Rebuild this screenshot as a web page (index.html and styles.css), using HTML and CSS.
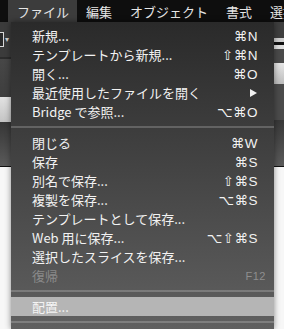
FILE: index.html
```html
<!DOCTYPE html>
<html lang="ja">
<head>
    <meta charset="UTF-8">
    <title>ファイル メニュー</title>
    <link rel="stylesheet" href="styles.css">
</head>
<body>
<div class="screen">
    <div class="menubar">
        <div class="bar-stub"><span>ト</span></div>
        <div class="bar-item active">ファイル</div>
        <div class="bar-item">編集</div>
        <div class="bar-item">オブジェクト</div>
        <div class="bar-item">書式</div>
        <div class="bar-item">選択</div>
    </div>

    <div class="workspace">
        <!-- app window behind the menu, left strip -->
        <div class="side side-left">
            <div class="bg-dark">
                <div class="dropdown"><span class="dd-box"></span><span class="dd-arrow">▾</span></div>
            </div>
            <div class="bg-line"></div>
            <div class="bg-mid"></div>
            <div class="bg-light"></div>
            <div class="bg-grad"></div>
            <div class="bg-black"></div>
            <div class="bg-white"></div>
        </div>

        <div class="menu">
            <div class="item"><span>新規...</span><span class="key">⌘N</span></div>
            <div class="item"><span>テンプレートから新規...</span><span class="key">⇧⌘N</span></div>
            <div class="item"><span>開く...</span><span class="key">⌘O</span></div>
            <div class="item"><span>最近使用したファイルを開く</span><span class="submenu"></span></div>
            <div class="item"><span>Bridge で参照...</span><span class="key">⌥⌘O</span></div>
            <div class="separator"></div>
            <div class="item"><span>閉じる</span><span class="key">⌘W</span></div>
            <div class="item"><span>保存</span><span class="key">⌘S</span></div>
            <div class="item"><span>別名で保存...</span><span class="key">⇧⌘S</span></div>
            <div class="item"><span>複製を保存...</span><span class="key">⌥⌘S</span></div>
            <div class="item"><span>テンプレートとして保存...</span></div>
            <div class="item"><span>Web 用に保存...</span><span class="key">⌥⇧⌘S</span></div>
            <div class="item"><span>選択したスライスを保存...</span></div>
            <div class="item disabled"><span>復帰</span><span class="key fkey">F12</span></div>
            <div class="separator"></div>
            <div class="item selected"><span>配置...</span></div>
            <div class="separator"></div>
        </div>

        <!-- app window behind the menu, right strip -->
        <div class="side side-right">
            <div class="r-dark"></div>
            <div class="r-field"></div>
            <div class="r-dark2"></div>
            <div class="r-light"></div>
            <div class="r-mid"></div>
            <div class="r-grad"></div>
            <div class="bg-black"></div>
            <div class="bg-white"></div>
        </div>
    </div>
</div>
</body>
</html>
```

FILE: styles.css
```css
body {
    margin: 0;
    background-color: #f6f6f6;
    font-family: "Noto Sans CJK JP", "Noto Sans", sans-serif;
}
.screen {
    width: 284px;
    height: 329px;
    overflow: hidden;
}
.menubar {
    display: flex;
    height: 22px;
    background-color: #0e0e0e;
    color: #e6e6e6;
    font-size: 13px;
    white-space: nowrap;
    overflow: hidden;
}
.bar-stub {
    width: 3px;
    padding-right: 8px;
    display: flex;
    justify-content: flex-end;
    align-items: center;
    overflow: hidden;
}
.bar-item {
    display: flex;
    align-items: center;
    padding: 0 9px;
}
.bar-item.active {
    background-color: #3c3c3c;
    padding: 0 8px 0 9px;
}

.workspace {
    display: grid;
    grid-template-columns: 11px 263px 10px;
    height: 307px;
}
.side {
    display: flex;
    flex-direction: column;
}

/* left strip */
.bg-dark {
    height: 35px;
    background-color: #3b3b3b;
    display: flex;
    align-items: center;
}
.dropdown {
    display: flex;
    align-items: center;
    gap: 1px;
}
.dd-box {
    width: 3px;
    height: 13px;
    border: 1px solid #d8d8d8;
    border-left: none;
    background-color: #2a2a2a;
}
.dd-arrow {
    color: #cfcfcf;
    font-size: 8px;
    font-family: "DejaVu Sans", sans-serif;
}
.bg-line {
    height: 2px;
    background-color: #2c2c2c;
}
.bg-mid {
    height: 38px;
    background: linear-gradient(#474747, #3e3e3e);
}
.bg-light {
    height: 25px;
    background: linear-gradient(#e2e2e2, #c4c4c4);
}
.bg-grad {
    height: 44px;
    background: linear-gradient(#363636, #5a5a5a);
}
.bg-black {
    height: 1px;
    background-color: #111;
}
.bg-white {
    flex: 1;
    background-color: #f7f7f7;
}

/* right strip */
.r-dark {
    height: 16px;
    background-color: #3e3e3e;
}
.r-field {
    height: 11px;
    background: linear-gradient(#d0d0d0 0, #d0d0d0 40%, #111 40%, #111 60%, #e0e0e0 60%);
}
.r-dark2 {
    height: 14px;
    background-color: #4a4a4a;
}
.r-light {
    height: 21px;
    background: linear-gradient(#e6e6e6, #bdbdbd);
}
.r-mid {
    height: 36px;
    background-color: #4b4b4b;
}
.r-grad {
    height: 46px;
    background: linear-gradient(#383838, #5a5a5a);
}

/* the menu itself */
.menu {
    position: relative;
    z-index: 1;
    padding-top: 4px;
    background: linear-gradient(#2a2a2a, #606060);
    box-shadow: 0 0 6px rgba(0, 0, 0, 0.45);
    color: #f2f2f2;
    font-size: 13px;
}
.item {
    display: flex;
    justify-content: space-between;
    align-items: center;
    height: 19px;
    padding: 0 16px 0 21px;
    white-space: nowrap;
}
.key {
    font-family: "Liberation Sans", "DejaVu Sans", sans-serif;
    font-size: 13.5px;
    letter-spacing: 0.5px;
}
.fkey {
    font-size: 11px;
    color: #8e8e8e;
    margin-right: -8px;
}
.submenu {
    width: 0;
    height: 0;
    margin-right: 1px;
    border-left: 7px solid #f2f2f2;
    border-top: 4.5px solid transparent;
    border-bottom: 4.5px solid transparent;
}
.disabled {
    color: #8a8a8a;
}
.selected {
    background-color: #b5b5b5;
    color: #f4f4f4;
}
.separator {
    height: 12px;
    display: flex;
    align-items: center;
}
.separator::before {
    content: "";
    flex: 1;
    height: 2px;
    background-color: rgba(255, 255, 255, 0.2);
}
```
